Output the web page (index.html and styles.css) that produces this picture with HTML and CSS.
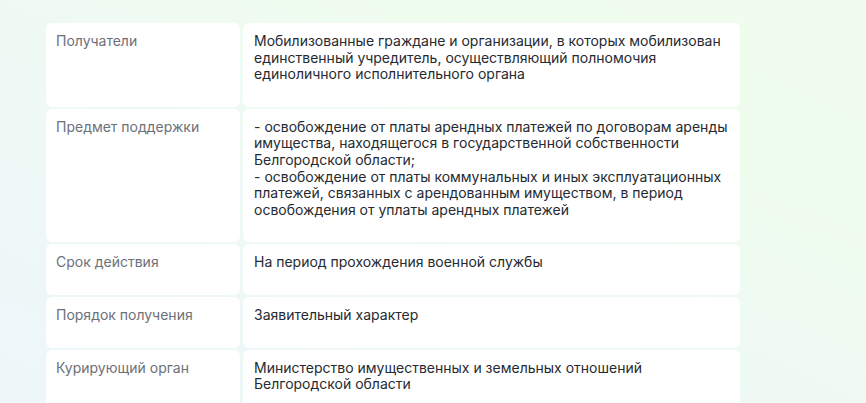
FILE: index.html
```html
<!DOCTYPE html>
<html lang="ru">
<head>
<meta charset="utf-8">
<link rel="stylesheet" href="styles.css">
</head>
<body>
<div class="table">
  <div class="cell label">Получатели</div>
  <div class="cell value">Мобилизованные граждане и организации, в которых мобилизован единственный учредитель, осуществляющий полномочия единоличного исполнительного органа</div>
  <div class="cell label">Предмет поддержки</div>
  <div class="cell value">- освобождение от платы арендных платежей по договорам аренды имущества, находящегося в государственной собственности Белгородской области;<br>- освобождение от платы коммунальных и иных эксплуатационных платежей, связанных с арендованным имуществом, в период освобождения от уплаты арендных платежей</div>
  <div class="cell label">Срок действия</div>
  <div class="cell value">На период прохождения военной службы</div>
  <div class="cell label">Порядок получения</div>
  <div class="cell value">Заявительный характер</div>
  <div class="cell label">Курирующий орган</div>
  <div class="cell value">Министерство имущественных и земельных отношений Белгородской области</div>
</div>
</body>
</html>
```
FILE: styles.css
```css
html, body {
  margin: 0;
  height: 100%;
}
body {
  background: linear-gradient(to top right, #edf6fa 0%, #eff9f4 45%, #effdee 75%, #f0fcee 100%);
  font-family: Inter, "Noto Sans", sans-serif;
  font-size: 14px;
  line-height: 16.6px;
  overflow: hidden;
}
.table {
  display: grid;
  grid-template-columns: 194px 497px;
  column-gap: 3px;
  row-gap: 2px;
  padding: 23px 0 0 46px;
}
.cell {
  background: #fff;
  border-radius: 6px;
  padding: 10px 10px 24px 10px;
}
.label {
  color: #6c7079;
}
.value {
  color: #262a31;
  padding-left: 11px;
}
```
